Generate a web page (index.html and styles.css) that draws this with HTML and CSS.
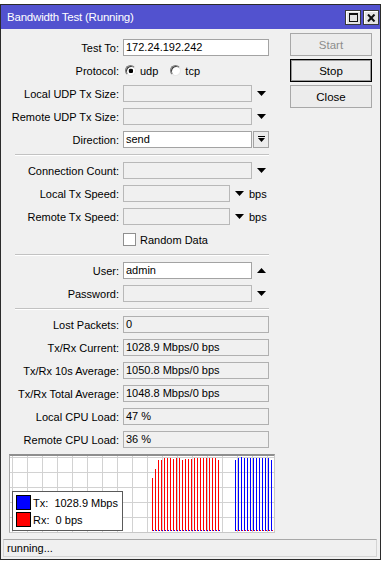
FILE: index.html
```html
<!DOCTYPE html>
<html lang="en">
<head>
  <meta charset="UTF-8">
  <title>Bandwidth Test (Running)</title>
  <link rel="stylesheet" href="styles.css">
</head>
<body>
  <div class="window">
    <div class="titlebar">
      <span class="title">Bandwidth Test (Running)</span>
      <div class="tb-buttons">
        <span class="tb-btn"><span class="max-icon"></span></span>
        <span class="tb-btn">
          <svg width="9" height="8" viewBox="0 0 9 8"><path d="M1 0.5L7.5 7.5M7.5 0.5L1 7.5" stroke="#111" stroke-width="2"/></svg>
        </span>
      </div>
    </div>

    <div class="client">
      <div class="main">
        <div class="form">
          <div class="row"><span class="lbl">Test To:</span><span class="fld white w-full">172.24.192.242</span></div>
          <div class="row"><span class="lbl">Protocol:</span>
            <span class="radio checked"></span><span class="opt">udp</span>
            <span class="radio"></span><span class="opt">tcp</span>
          </div>
          <div class="row"><span class="lbl">Local UDP Tx Size:</span><span class="fld gray w-drop"></span>
            <svg class="arrow" width="9" height="5" viewBox="0 0 9 5"><path d="M0 0H9L4.5 5Z"/></svg></div>
          <div class="row"><span class="lbl">Remote UDP Tx Size:</span><span class="fld gray w-drop"></span>
            <svg class="arrow" width="9" height="5" viewBox="0 0 9 5"><path d="M0 0H9L4.5 5Z"/></svg></div>
          <div class="row"><span class="lbl">Direction:</span><span class="fld white w-drop">send</span>
            <span class="dd-btn"><svg width="7" height="7" viewBox="0 0 7 7"><path d="M0 0.5H7" stroke="#000"/><path d="M0 2H7L3.5 6Z"/></svg></span></div>

          <div class="sep"></div>

          <div class="row"><span class="lbl">Connection Count:</span><span class="fld gray w-drop"></span>
            <svg class="arrow" width="9" height="5" viewBox="0 0 9 5"><path d="M0 0H9L4.5 5Z"/></svg></div>
          <div class="row"><span class="lbl">Local Tx Speed:</span><span class="fld gray w-speed"></span>
            <svg class="arrow" width="9" height="5" viewBox="0 0 9 5"><path d="M0 0H9L4.5 5Z"/></svg><span class="unit">bps</span></div>
          <div class="row"><span class="lbl">Remote Tx Speed:</span><span class="fld gray w-speed"></span>
            <svg class="arrow" width="9" height="5" viewBox="0 0 9 5"><path d="M0 0H9L4.5 5Z"/></svg><span class="unit">bps</span></div>
          <div class="row"><span class="lbl"></span><span class="check"></span><span class="opt">Random Data</span></div>

          <div class="sep"></div>

          <div class="row"><span class="lbl">User:</span><span class="fld white w-drop">admin</span>
            <svg class="arrow" width="9" height="5" viewBox="0 0 9 5"><path d="M0 5H9L4.5 0Z"/></svg></div>
          <div class="row"><span class="lbl">Password:</span><span class="fld gray w-drop"></span>
            <svg class="arrow" width="9" height="5" viewBox="0 0 9 5"><path d="M0 0H9L4.5 5Z"/></svg></div>

          <div class="sep"></div>

          <div class="row"><span class="lbl">Lost Packets:</span><span class="fld ro w-full">0</span></div>
          <div class="row"><span class="lbl">Tx/Rx Current:</span><span class="fld ro w-full">1028.9 Mbps/0 bps</span></div>
          <div class="row"><span class="lbl">Tx/Rx 10s Average:</span><span class="fld ro w-full">1050.8 Mbps/0 bps</span></div>
          <div class="row"><span class="lbl">Tx/Rx Total Average:</span><span class="fld ro w-full">1048.8 Mbps/0 bps</span></div>
          <div class="row"><span class="lbl">Local CPU Load:</span><span class="fld ro w-full">47 %</span></div>
          <div class="row"><span class="lbl">Remote CPU Load:</span><span class="fld ro w-full">36 %</span></div>

          <div class="graph">
            <svg width="264" height="76" viewBox="0 0 264 76">
              <path stroke="#d2d2d2" fill="none" d="M2.5 0V76M17.5 0V76M32.5 0V76M47.5 0V76M62.5 0V76M77.5 0V76M92.5 0V76M107.5 0V76M122.5 0V76M137.5 0V76M152.5 0V76M167.5 0V76M182.5 0V76M197.5 0V76M212.5 0V76M227.5 0V76M242.5 0V76M257.5 0V76M0 1.5H264M0 16.5H264M0 31.5H264M0 46.5H264M0 61.5H264"/>
              <path stroke="#ff0000" fill="none" d="M142.5 22V75M145.5 13V75M148.5 4V75M151.5 4V75M154.5 2V75M157.5 2V75M160.5 2V75M163.5 3V75M166.5 2V75M169.5 2V75M172.5 4V75M175.5 3V75M178.5 3V75M181.5 3V75M184.5 2V75M187.5 2V75M190.5 2V75M193.5 2V75M196.5 2V75M199.5 2V75M202.5 2V75M205.5 2V75M208.5 4V75"/>
              <path stroke="#0000ff" fill="none" d="M225.5 4V75M228.5 2V75M231.5 1V75M234.5 2V75M237.5 2V75M240.5 2V75M243.5 2V75M246.5 2V75M249.5 2V75M252.5 2V75M255.5 2V75M258.5 2V75M261.5 4V75"/>
              <path stroke="#0000ff" fill="none" d="M143.5 74V75M146.5 74V75M149.5 74V75M152.5 74V75M155.5 74V75M158.5 74V75M161.5 74V75M164.5 74V75M167.5 74V75M170.5 74V75M173.5 74V75M176.5 74V75M179.5 74V75M182.5 74V75M185.5 74V75M188.5 74V75M191.5 74V75M194.5 74V75M197.5 74V75M200.5 74V75M203.5 74V75M206.5 74V75M209.5 74V75"/>
              <path stroke="#ff0000" fill="none" d="M226.5 74V75M229.5 74V75M232.5 74V75M235.5 74V75M238.5 74V75M241.5 74V75M244.5 74V75M247.5 74V75M250.5 74V75M253.5 74V75M256.5 74V75M259.5 74V75M262.5 74V75"/>
            </svg>
            <div class="legend">
              <div class="leg-row"><span class="swatch tx"></span>Tx:&nbsp;&nbsp;1028.9 Mbps</div>
              <div class="leg-row"><span class="swatch rx"></span>Rx:&nbsp;&nbsp;0 bps</div>
            </div>
          </div>
        </div>

        <div class="buttons">
          <div class="btn disabled">Start</div>
          <div class="btn default">Stop</div>
          <div class="btn">Close</div>
        </div>
      </div>

      <div class="status">running...</div>
    </div>
  </div>
</body>
</html>
```

FILE: styles.css
```css
/* ---- page ---- */
body {
  margin: 0; padding-top: 4px;
  background: #fff;
  font-family: "Liberation Sans", Arial, sans-serif; font-size: 11px; color: #000;
}

/* ---- window frame ---- */
.window { width: 379px; height: 554px; border: 1px solid #2b2b2b; background: #f0f0f0; display: flex; flex-direction: column; }
.titlebar { height: 24px; background: #5252cf; color: #fff; display: flex; align-items: center; justify-content: space-between; }
.title { padding-left: 6px; font-size: 11.5px; letter-spacing: -0.2px; }
.tb-buttons { display: flex; gap: 2px; align-self: flex-start; margin-top: 5px; padding-right: 1px; }
.tb-btn { width: 14px; height: 13px; background: #e4e4e4; border: 1px solid #3a3a3a; box-shadow: inset 1px 1px 0 #fff;
          display: flex; align-items: center; justify-content: center; }
.max-icon { width: 7px; height: 6px; border: 1px solid #111; border-top-width: 2px; }

/* ---- client area ---- */
.client { flex: 1; display: flex; flex-direction: column; }
.main { display: flex; flex: 1; }
.form { width: 275px; padding-top: 10px; }
.buttons { margin-left: 14px; padding-top: 4px; display: flex; flex-direction: column; gap: 3px; }

.row { display: flex; align-items: center; height: 17px; margin-bottom: 6px; white-space: nowrap; }
.lbl { width: 118px; margin-right: 4px; text-align: right; flex: none; }

.fld { box-sizing: border-box; height: 17px; border: 1px solid #b8b8b8; padding: 0 2px; line-height: 15px; flex: none; }
.fld.white { background: #fff; border-color: #a3a3a3; }
.fld.gray { background: #f0f0f0; }
.fld.ro { background: #f0f0f0; border-color: #b0b0b0; }
.w-full { width: 146px; }
.w-drop { width: 129px; }
.w-speed { width: 107px; }

.arrow { margin-left: 5px; flex: none; }
.unit { margin-left: 5px; }
.dd-btn { box-sizing: border-box; width: 16px; height: 17px; margin-left: 1px; border: 1px solid #a3a3a3; background: #ececec;
          display: flex; align-items: center; justify-content: center; }

.radio { box-sizing: border-box; width: 11px; height: 11px; border-radius: 50%; background: #fff; margin-left: 2px; margin-right: 4px;
         border: 1px solid; border-color: #7a7a7a #e8e8e8 #e8e8e8 #7a7a7a; box-shadow: inset 1px 1px 0 #404040; }
.radio.checked { background: radial-gradient(circle at 55% 55%, #000 0 2px, #fff 2.6px); }
.opt + .radio { margin-left: 12px; }
.check { box-sizing: border-box; width: 13px; height: 13px; background: #fff; border: 1px solid #8f8f8f; margin-right: 4px; }

.sep { width: 254px; margin: 0 0 6px 14px; height: 1px; background: #c2c2c2; border-bottom: 1px solid #fff; }

/* ---- graph ---- */
.graph { position: relative; width: 264px; height: 76px; margin-left: 8px; background: #fff;
         border: 1px solid #c8c8c8; border-top: 2px solid #8e8e8e; border-left-color: #a8a8a8; }
.graph svg { display: block; }
.legend { position: absolute; left: 2px; top: 35px; box-sizing: border-box; width: 111px; height: 40px;
          border: 1px solid #5a5a5a; background: #fff; padding: 2px 0 0 3px; }
.leg-row { display: flex; align-items: center; height: 17px; white-space: nowrap; }
.swatch { box-sizing: border-box; width: 15px; height: 15px; border: 1px solid #000; margin-right: 2px; }
.swatch.tx { background: #0000ff; }
.swatch.rx { background: #ff0000; }

/* ---- push buttons ---- */
.btn { box-sizing: border-box; width: 82px; height: 23px; border: 1px solid #a8a8a8; background: #ececec;
       display: flex; align-items: center; justify-content: center; font-size: 11.5px; }
.btn.disabled { color: #8d8d8d; }
.btn.default { border-color: #000; box-shadow: inset 0 0 0 1px #9a9a9a; }

/* ---- status bar ---- */
.status { box-sizing: border-box; height: 18px; margin: 0 3px 2px 2px; padding-left: 3px; line-height: 17px;
          border: 1px solid #d4d4d4; border-top-color: #a8a8a8; }
```
